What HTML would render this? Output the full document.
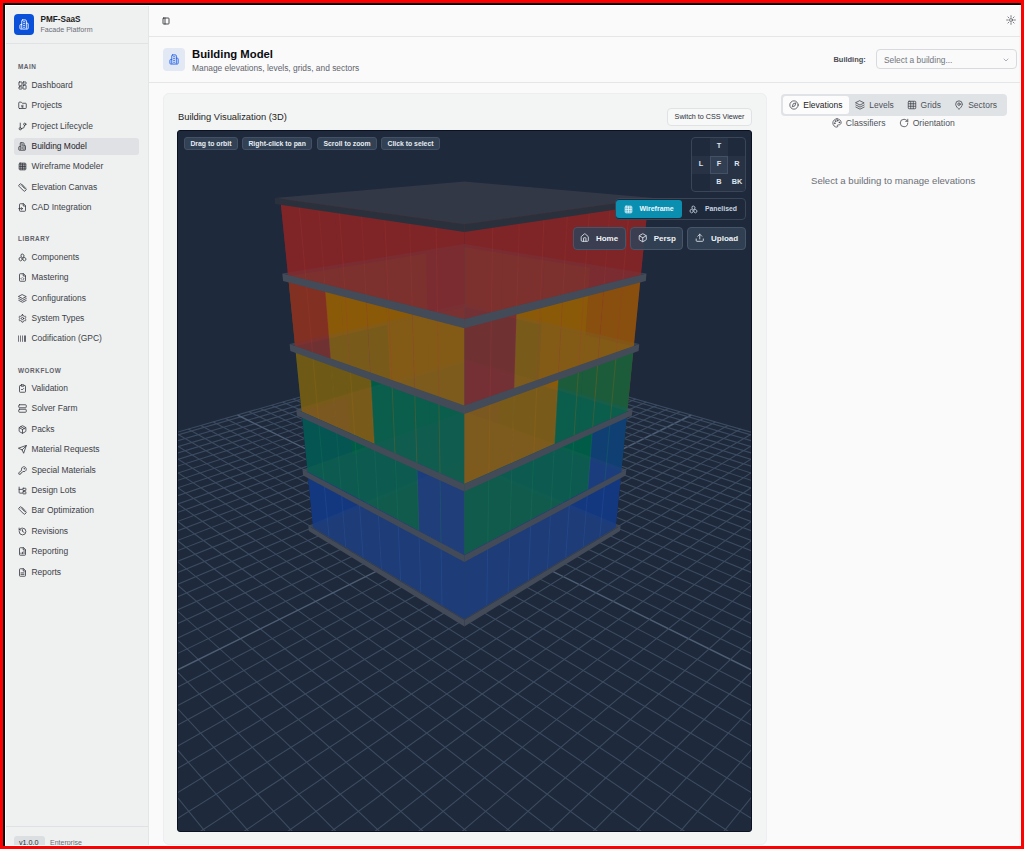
<!DOCTYPE html>
<html><head><meta charset="utf-8"><style>
*{box-sizing:border-box;margin:0;padding:0}
html,body{width:1024px;height:849px;overflow:hidden;background:#ff0000;font-family:"Liberation Sans",sans-serif}
.frame{position:absolute;left:3px;top:3px;width:1018px;height:843px;background:#fdffff;border-top:2px solid #05070c;border-left:2px solid #05070c;overflow:hidden}
.app{position:absolute;left:1px;top:1px;width:1014px;height:839px;background:#fafafa;overflow:hidden}
.side{position:absolute;left:0;top:0;width:143px;height:839px;background:#eff0f0;border-right:1px solid #e3e5e7}
.logo{position:absolute;left:8px;top:8px;width:20px;height:21px;border-radius:4px;background:#0b50d8;display:flex;align-items:center;justify-content:center;color:#fff}
.brand{position:absolute;left:34.5px;top:9px;font-weight:bold;font-size:8.2px;color:#1c1c22;white-space:nowrap}
.brand2{position:absolute;left:34.5px;top:20px;font-size:7.1px;color:#6b6f78;white-space:nowrap}
.sdiv{position:absolute;left:0;top:37px;width:142px;height:1px;background:#e0e2e4}
.sec{position:absolute;left:12px;font-size:6.4px;font-weight:bold;color:#5e616a;letter-spacing:0.55px;line-height:9px}
.nav{position:absolute;left:8px;width:125px;height:17px;border-radius:3px;color:#3c3f47;font-size:8.45px;line-height:17px;white-space:nowrap}
.nav.act{background:#dfe1e4;color:#1e2028}
.ni{position:absolute;left:4px;top:4px;width:9px;height:9px;color:#4a4d55}
.ni svg{display:block}
.nt{position:absolute;left:17.5px;top:0}
.sfoot{position:absolute;left:0;top:820px;width:142px;height:1px;background:#dfe1e4}
.ver{position:absolute;left:8px;top:830px;width:31px;height:14px;border-radius:3px;background:#dcdfe2;font-size:7.2px;color:#2c2f37;padding:1.8px 0 0 5px;line-height:10px}
.ent{position:absolute;left:44px;top:832.3px;font-size:7px;line-height:10px;color:#6b6f78}
.main{position:absolute;left:143px;top:0;width:871px;height:839px}
.hdr{position:absolute;left:0;top:0;width:871px;height:31px;border-bottom:1px solid #e4e6e8;background:#fafafa}
.ph{position:absolute;left:0;top:31px;width:871px;height:46px;border-bottom:1px solid #e4e6e8;background:#fafafa}
.picon{position:absolute;left:14px;top:11px;width:22px;height:23px;border-radius:4px;background:#e2e8f4;color:#2563eb;display:flex;align-items:center;justify-content:center}
.ptitle{position:absolute;left:43px;top:11px;font-size:11.3px;font-weight:bold;color:#0b0b10;white-space:nowrap}
.psub{position:absolute;left:43px;top:25.5px;font-size:8.4px;color:#5f636b;white-space:nowrap}
.blabel{position:absolute;left:684.5px;top:18.3px;font-size:7.45px;font-weight:bold;color:#4a4d55}
.select{position:absolute;left:727px;top:12px;width:141px;height:20px;border:1px solid #d8dadd;border-radius:4px;background:#fafafa;font-size:8.4px;color:#71757d;padding:4.5px 0 0 7px}
.select svg{position:absolute!important;right:6px;top:5.5px}
.card{position:absolute;left:14px;top:87px;width:604px;height:752px;border:1px solid #eceeef;border-radius:6px;background:#f3f4f4}
.ctitle{position:absolute;left:14px;top:18px;font-size:9.35px;color:#1c1d22;white-space:nowrap}
.cssbtn{position:absolute;left:503px;top:13.5px;width:85px;height:18.5px;border:1px solid #e0e2e4;border-radius:4px;background:#f7f8f8;font-size:7.2px;color:#2c2f36;text-align:center;line-height:16.5px}
.canvas{position:absolute;left:13px;top:36px;width:575px;height:702px;border:1px solid #0b1120;border-radius:3px;background:#1e293b;overflow:hidden}
.canvas svg.sc{position:absolute;left:-1px;top:-1px}
.chip{position:absolute;top:6px;height:13px;border:1px solid #435066;border-radius:3px;background:#334155;color:#e8edf3;font-size:6.85px;font-weight:bold;line-height:11px;text-align:center;white-space:nowrap}
.cube{position:absolute;left:513px;top:6px;width:55px;height:55px;border:1px solid #3a4658;border-radius:4px;background:#1f2a3c;overflow:hidden}
.cell{position:absolute;width:18px;height:18px;color:#dfe5ec;font-size:7.3px;font-weight:bold;text-align:center;line-height:16.5px;background:#273345}
.tog{position:absolute;left:437px;top:67.4px;width:131px;height:21.6px;border:1px solid #3a4556;border-radius:4px;background:#1e293b}
.tw{position:absolute;left:0.4px;top:0.6px;width:65.4px;height:18.3px;border-radius:3px;background:#0a8fb0;color:#f0f9ff;font-size:7.05px;font-weight:bold}
.tp{position:absolute;left:67px;top:0.6px;width:62px;height:18.3px;color:#cbd5e1;font-size:6.85px;font-weight:bold}
.btn{position:absolute;top:96.2px;height:22.5px;border:1px solid #475569;border-radius:4px;background:rgba(51,65,85,0.9);color:#eef2f6;font-size:8px;font-weight:bold;white-space:nowrap}
.btn svg,.tw svg,.tp svg{position:absolute!important}
.btn span,.tw span,.tp span{position:absolute}
.rp{position:absolute;left:632px;top:87.8px;width:240px;height:752px}
.tabs{position:absolute;left:0px;top:0;width:226px;height:22px;border-radius:4px;background:#e0e3e6}
.tab{position:absolute;top:2px;height:18px;font-size:8.5px;color:#4e525a;white-space:nowrap}
.tab.act{background:#fcfcfc;border-radius:3px;color:#1c1d22}
.tab svg,.tab span{position:absolute!important}
.tab2{position:absolute;top:24.5px;font-size:8.6px;color:#4e525a;white-space:nowrap}
.tab2 svg,.tab2 span{position:absolute!important}
.empty{position:absolute;left:30px;top:81px;font-size:9.6px;color:#6b6f77;white-space:nowrap}
</style></head><body>
<div class="frame"><div class="app">
<div class="side">
 <div class="logo"><svg width="11" height="11" viewBox="0 0 24 24" fill="none" stroke="currentColor" stroke-width="1.9636363636363638" stroke-linecap="round" stroke-linejoin="round" style="display:block"><rect x="6" y="2" width="10" height="20" rx="2"/><path d="M6 12H4a2 2 0 0 0-2 2v6a2 2 0 0 0 2 2h2"/><path d="M16 9h2a2 2 0 0 1 2 2v9a2 2 0 0 1-2 2h-2"/><path d="M10 6h2M10 10h2M10 14h2M10 18h2"/></svg></div>
 <div class="brand">PMF-SaaS</div>
 <div class="brand2">Facade Platform</div>
 <div class="sdiv"></div>
<div class="sec" style="top:55.7px">MAIN</div>
<div class="nav" style="top:70.6px"><span class="ni"><svg width="9" height="9" viewBox="0 0 24 24" fill="none" stroke="#33363e" stroke-width="2.1333333333333337" stroke-linecap="round" stroke-linejoin="round" style="display:block"><rect x="2.5" y="2.5" width="8" height="10" rx="1.2"/><rect x="13.5" y="2.5" width="8" height="6" rx="1.2"/><rect x="13.5" y="11.5" width="8" height="10" rx="1.2"/><rect x="2.5" y="15.5" width="8" height="6" rx="1.2"/></svg></span><span class="nt">Dashboard</span></div>
<div class="nav" style="top:91.0px"><span class="ni"><svg width="9" height="9" viewBox="0 0 24 24" fill="none" stroke="#33363e" stroke-width="2.1333333333333337" stroke-linecap="round" stroke-linejoin="round" style="display:block"><path d="M4 20h16a2 2 0 0 0 2-2V8a2 2 0 0 0-2-2h-7.9a2 2 0 0 1-1.7-.9L9.6 3.9A2 2 0 0 0 7.9 3H4a2 2 0 0 0-2 2v13a2 2 0 0 0 2 2Z"/><path d="M9 13h2v4M13 11v6"/></svg></span><span class="nt">Projects</span></div>
<div class="nav" style="top:111.6px"><span class="ni"><svg width="9" height="9" viewBox="0 0 24 24" fill="none" stroke="#33363e" stroke-width="2.1333333333333337" stroke-linecap="round" stroke-linejoin="round" style="display:block"><circle cx="18" cy="6" r="3"/><circle cx="6" cy="18" r="3"/><path d="M6 3v12"/><path d="M18 9a9 9 0 0 1-9 9"/></svg></span><span class="nt">Project Lifecycle</span></div>
<div class="nav act" style="top:131.7px"><span class="ni"><svg width="9" height="9" viewBox="0 0 24 24" fill="none" stroke="#33363e" stroke-width="2.1333333333333337" stroke-linecap="round" stroke-linejoin="round" style="display:block"><rect x="6" y="2" width="10" height="20" rx="2"/><path d="M6 12H4a2 2 0 0 0-2 2v6a2 2 0 0 0 2 2h2"/><path d="M16 9h2a2 2 0 0 1 2 2v9a2 2 0 0 1-2 2h-2"/><path d="M10 6h2M10 10h2M10 14h2M10 18h2"/></svg></span><span class="nt">Building Model</span></div>
<div class="nav" style="top:152.1px"><span class="ni"><svg width="9" height="9" viewBox="0 0 24 24" fill="none" stroke="#33363e" stroke-width="2.1333333333333337" stroke-linecap="round" stroke-linejoin="round" style="display:block"><rect x="3" y="3" width="18" height="18" rx="2.5"/><path d="M3 7.5h18M3 12h18M3 16.5h18M7.5 3v18M12 3v18M16.5 3v18" stroke-linecap="butt"/></svg></span><span class="nt">Wireframe Modeler</span></div>
<div class="nav" style="top:172.8px"><span class="ni"><svg width="9" height="9" viewBox="0 0 24 24" fill="none" stroke="#33363e" stroke-width="2.1333333333333337" stroke-linecap="round" stroke-linejoin="round" style="display:block"><path d="M21.3 15.3a2.4 2.4 0 0 1 0 3.4l-2.6 2.6a2.4 2.4 0 0 1-3.4 0L2.7 8.7a2.41 2.41 0 0 1 0-3.4l2.6-2.6a2.41 2.41 0 0 1 3.4 0Z"/><path d="m14.5 12.5 2-2M11.5 9.5l2-2M8.5 6.5l2-2M17.5 15.5l2-2"/></svg></span><span class="nt">Elevation Canvas</span></div>
<div class="nav" style="top:193.2px"><span class="ni"><svg width="9" height="9" viewBox="0 0 24 24" fill="none" stroke="#33363e" stroke-width="2.1333333333333337" stroke-linecap="round" stroke-linejoin="round" style="display:block"><path d="M14 2H6a2 2 0 0 0-2 2v16a2 2 0 0 0 2 2h12a2 2 0 0 0 2-2V8Z"/><path d="M14 2v6h6"/><path d="M2 15h10M9 18l3-3-3-3"/></svg></span><span class="nt">CAD Integration</span></div>
<div class="sec" style="top:227.9px">LIBRARY</div>
<div class="nav" style="top:242.7px"><span class="ni"><svg width="9" height="9" viewBox="0 0 24 24" fill="none" stroke="#33363e" stroke-width="2.1333333333333337" stroke-linecap="round" stroke-linejoin="round" style="display:block"><path d="M12 3l4 2.5v4L12 12l-4-2.5v-4Z"/><path d="M7 12l4 2.5v4L7 21l-4-2.5v-4Z"/><path d="M17 12l4 2.5v4L17 21l-4-2.5v-4Z"/></svg></span><span class="nt">Components</span></div>
<div class="nav" style="top:263.2px"><span class="ni"><svg width="9" height="9" viewBox="0 0 24 24" fill="none" stroke="#33363e" stroke-width="2.1333333333333337" stroke-linecap="round" stroke-linejoin="round" style="display:block"><path d="M14 2H6a2 2 0 0 0-2 2v16a2 2 0 0 0 2 2h12a2 2 0 0 0 2-2V8Z"/><path d="M14 2v6h6"/><path d="m10 13-2 2 2 2M14 17l2-2-2-2"/></svg></span><span class="nt">Mastering</span></div>
<div class="nav" style="top:283.7px"><span class="ni"><svg width="9" height="9" viewBox="0 0 24 24" fill="none" stroke="#33363e" stroke-width="2.1333333333333337" stroke-linecap="round" stroke-linejoin="round" style="display:block"><path d="m12 2 10 5-10 5L2 7Z"/><path d="m2 12 10 5 10-5"/><path d="m2 17 10 5 10-5"/></svg></span><span class="nt">Configurations</span></div>
<div class="nav" style="top:303.5px"><span class="ni"><svg width="9" height="9" viewBox="0 0 24 24" fill="none" stroke="#33363e" stroke-width="2.1333333333333337" stroke-linecap="round" stroke-linejoin="round" style="display:block"><path d="M12.22 2h-.44a2 2 0 0 0-2 2v.18a2 2 0 0 1-1 1.73l-.43.25a2 2 0 0 1-2 0l-.15-.08a2 2 0 0 0-2.73.73l-.22.38a2 2 0 0 0 .73 2.73l.15.1a2 2 0 0 1 1 1.72v.51a2 2 0 0 1-1 1.74l-.15.09a2 2 0 0 0-.73 2.73l.22.38a2 2 0 0 0 2.73.73l.15-.08a2 2 0 0 1 2 0l.43.25a2 2 0 0 1 1 1.73V20a2 2 0 0 0 2 2h.44a2 2 0 0 0 2-2v-.18a2 2 0 0 1 1-1.73l.43-.25a2 2 0 0 1 2 0l.15.08a2 2 0 0 0 2.73-.73l.22-.39a2 2 0 0 0-.73-2.73l-.15-.08a2 2 0 0 1-1-1.74v-.5a2 2 0 0 1 1-1.74l.15-.09a2 2 0 0 0 .73-2.73l-.22-.38a2 2 0 0 0-2.73-.73l-.15.08a2 2 0 0 1-2 0l-.43-.25a2 2 0 0 1-1-1.73V4a2 2 0 0 0-2-2z"/><circle cx="12" cy="12" r="3"/></svg></span><span class="nt">System Types</span></div>
<div class="nav" style="top:323.8px"><span class="ni"><svg width="9" height="9" viewBox="0 0 9 9" style="display:block"><path d="M0.5 1.5v6.3M2.5 1.5v6.3M4.5 1.5v6.3" stroke="#66686e" stroke-width="0.9"/><rect x="6" y="1.5" width="2" height="6.3" fill="#66686e"/></svg></span><span class="nt">Codification (GPC)</span></div>
<div class="sec" style="top:359.6px">WORKFLOW</div>
<div class="nav" style="top:374.4px"><span class="ni"><svg width="9" height="9" viewBox="0 0 24 24" fill="none" stroke="#33363e" stroke-width="2.1333333333333337" stroke-linecap="round" stroke-linejoin="round" style="display:block"><rect x="8" y="2" width="8" height="4" rx="1"/><path d="M16 4h2a2 2 0 0 1 2 2v14a2 2 0 0 1-2 2H6a2 2 0 0 1-2-2V6a2 2 0 0 1 2-2h2"/><path d="m9 14 2 2 4-4"/></svg></span><span class="nt">Validation</span></div>
<div class="nav" style="top:394.0px"><span class="ni"><svg width="9" height="9" viewBox="0 0 24 24" fill="none" stroke="#33363e" stroke-width="2.1333333333333337" stroke-linecap="round" stroke-linejoin="round" style="display:block"><rect x="2" y="2" width="20" height="8" rx="2"/><rect x="2" y="14" width="20" height="8" rx="2"/></svg></span><span class="nt">Solver Farm</span></div>
<div class="nav" style="top:414.5px"><span class="ni"><svg width="9" height="9" viewBox="0 0 24 24" fill="none" stroke="#33363e" stroke-width="2.1333333333333337" stroke-linecap="round" stroke-linejoin="round" style="display:block"><path d="M21 8a2 2 0 0 0-1-1.7l-7-4a2 2 0 0 0-2 0l-7 4A2 2 0 0 0 3 8v8a2 2 0 0 0 1 1.7l7 4a2 2 0 0 0 2 0l7-4a2 2 0 0 0 1-1.7Z"/><path d="M3.3 7 12 12l8.7-5M12 22V12M7.5 4.3l9 5.2"/></svg></span><span class="nt">Packs</span></div>
<div class="nav" style="top:435.3px"><span class="ni"><svg width="9" height="9" viewBox="0 0 24 24" fill="none" stroke="#33363e" stroke-width="2.1333333333333337" stroke-linecap="round" stroke-linejoin="round" style="display:block"><path d="m22 2-7 20-4-9-9-4Z"/><path d="M22 2 11 13"/></svg></span><span class="nt">Material Requests</span></div>
<div class="nav" style="top:455.5px"><span class="ni"><svg width="9" height="9" viewBox="0 0 24 24" fill="none" stroke="#33363e" stroke-width="2.1333333333333337" stroke-linecap="round" stroke-linejoin="round" style="display:block"><path d="M2.586 17.414A2 2 0 0 0 2 18.828V21a1 1 0 0 0 1 1h3a1 1 0 0 0 1-1v-1a1 1 0 0 1 1-1h1a1 1 0 0 0 1-1v-1a1 1 0 0 1 1-1h.172a2 2 0 0 0 1.414-.586l.814-.814a6.5 6.5 0 1 0-4-4z"/><circle cx="16.5" cy="7.5" r=".5"/></svg></span><span class="nt">Special Materials</span></div>
<div class="nav" style="top:475.6px"><span class="ni"><svg width="9" height="9" viewBox="0 0 24 24" fill="none" stroke="#33363e" stroke-width="2.1333333333333337" stroke-linecap="round" stroke-linejoin="round" style="display:block"><path d="M3 3v14a2 2 0 0 0 2 2h6"/><path d="M3 9h8"/><rect x="13" y="6" width="8" height="6" rx="1"/><rect x="13" y="15" width="8" height="6" rx="1"/></svg></span><span class="nt">Design Lots</span></div>
<div class="nav" style="top:496.2px"><span class="ni"><svg width="9" height="9" viewBox="0 0 24 24" fill="none" stroke="#33363e" stroke-width="2.1333333333333337" stroke-linecap="round" stroke-linejoin="round" style="display:block"><path d="M21.3 15.3a2.4 2.4 0 0 1 0 3.4l-2.6 2.6a2.4 2.4 0 0 1-3.4 0L2.7 8.7a2.41 2.41 0 0 1 0-3.4l2.6-2.6a2.41 2.41 0 0 1 3.4 0Z"/><path d="m14.5 12.5 2-2M11.5 9.5l2-2M8.5 6.5l2-2M17.5 15.5l2-2"/></svg></span><span class="nt">Bar Optimization</span></div>
<div class="nav" style="top:516.5px"><span class="ni"><svg width="9" height="9" viewBox="0 0 24 24" fill="none" stroke="#33363e" stroke-width="2.1333333333333337" stroke-linecap="round" stroke-linejoin="round" style="display:block"><path d="M3 12a9 9 0 1 0 9-9 9.75 9.75 0 0 0-6.74 2.74L3 8"/><path d="M3 3v5h5"/><path d="M12 7v5l4 2"/></svg></span><span class="nt">Revisions</span></div>
<div class="nav" style="top:537.1px"><span class="ni"><svg width="9" height="9" viewBox="0 0 24 24" fill="none" stroke="#33363e" stroke-width="2.1333333333333337" stroke-linecap="round" stroke-linejoin="round" style="display:block"><path d="M14 2H6a2 2 0 0 0-2 2v16a2 2 0 0 0 2 2h12a2 2 0 0 0 2-2V8Z"/><path d="M14 2v6h6"/><path d="M8 18v-2M12 18v-4M16 18v-6"/></svg></span><span class="nt">Reporting</span></div>
<div class="nav" style="top:557.7px"><span class="ni"><svg width="9" height="9" viewBox="0 0 24 24" fill="none" stroke="#33363e" stroke-width="2.1333333333333337" stroke-linecap="round" stroke-linejoin="round" style="display:block"><path d="M14 2H6a2 2 0 0 0-2 2v16a2 2 0 0 0 2 2h12a2 2 0 0 0 2-2V8Z"/><path d="M14 2v6h6"/><path d="M8 13h8M8 17h8"/></svg></span><span class="nt">Reports</span></div>
 <div class="sfoot"></div>
 <div class="ver">v1.0.0</div>
 <div class="ent">Enterprise</div>
</div>
<div class="main">
 <div class="hdr"><span style="position:absolute;left:13px;top:11px;color:#1f2127"><svg width="8" height="8" viewBox="0 0 24 24" fill="none" stroke="currentColor" stroke-width="2.4000000000000004" stroke-linecap="round" stroke-linejoin="round" style="display:block"><rect x="3" y="3" width="18" height="18" rx="2"/><path d="M9 3v18"/></svg></span><span style="position:absolute;left:856.8px;top:9px;color:#3a3d45"><svg width="10" height="10" viewBox="0 0 24 24" fill="none" stroke="currentColor" stroke-width="1.56" stroke-linecap="round" stroke-linejoin="round" style="display:block"><circle cx="12" cy="12" r="3.5"/><path d="M12 1.5v4M12 18.5v4M4.6 4.6l2.4 2.4M17 17l2.4 2.4M1.5 12h4M18.5 12h4M7 17l-2.4 2.4M19.4 4.6 17 7"/></svg></span></div>
 <div class="ph">
  <div class="picon"><svg width="11" height="11" viewBox="0 0 24 24" fill="none" stroke="currentColor" stroke-width="1.9636363636363638" stroke-linecap="round" stroke-linejoin="round" style="display:block"><rect x="6" y="2" width="10" height="20" rx="2"/><path d="M6 12H4a2 2 0 0 0-2 2v6a2 2 0 0 0 2 2h2"/><path d="M16 9h2a2 2 0 0 1 2 2v9a2 2 0 0 1-2 2h-2"/><path d="M10 6h2M10 10h2M10 14h2M10 18h2"/></svg></div>
  <div class="ptitle">Building Model</div>
  <div class="psub">Manage elevations, levels, grids, and sectors</div>
  <div class="blabel">Building:</div>
  <div class="select">Select a building...<svg width="8" height="8" viewBox="0 0 24 24" fill="none" stroke="#8a8e96" stroke-width="2.0999999999999996" stroke-linecap="round" stroke-linejoin="round" style="display:block"><path d="m6 9 6 6 6-6"/></svg></div>
 </div>
 <div class="card">
  <div class="ctitle">Building Visualization (3D)</div>
  <div class="cssbtn">Switch to CSS Viewer</div>
  <div class="canvas">
   <svg class="sc" width="576" height="703" viewBox="0 0 576 703"><line x1="-322.0" y1="394.5" x2="310.0" y2="1499.3" stroke="#3c4b61" stroke-width="1.1"/>
<line x1="-331.0" y1="400.7" x2="291.0" y2="221.1" stroke="#3c4b61" stroke-width="1.1"/>
<line x1="-300.7" y1="388.4" x2="352.4" y2="1421.2" stroke="#3c4b61" stroke-width="1.1"/>
<line x1="-327.5" y1="407.2" x2="298.5" y2="223.2" stroke="#3c4b61" stroke-width="1.1"/>
<line x1="-280.0" y1="382.5" x2="390.6" y2="1350.8" stroke="#3c4b61" stroke-width="1.1"/>
<line x1="-323.9" y1="413.8" x2="306.1" y2="225.4" stroke="#3c4b61" stroke-width="1.1"/>
<line x1="-259.9" y1="376.8" x2="425.2" y2="1286.9" stroke="#3c4b61" stroke-width="1.1"/>
<line x1="-320.2" y1="420.7" x2="313.8" y2="227.6" stroke="#3c4b61" stroke-width="1.1"/>
<line x1="-240.4" y1="371.2" x2="456.8" y2="1228.7" stroke="#3c4b61" stroke-width="1.1"/>
<line x1="-316.3" y1="427.8" x2="321.6" y2="229.8" stroke="#3c4b61" stroke-width="1.1"/>
<line x1="-221.4" y1="365.7" x2="485.6" y2="1175.5" stroke="#3c4b61" stroke-width="1.1"/>
<line x1="-312.3" y1="435.1" x2="329.6" y2="232.1" stroke="#3c4b61" stroke-width="1.1"/>
<line x1="-203.0" y1="360.4" x2="512.2" y2="1126.6" stroke="#3c4b61" stroke-width="1.1"/>
<line x1="-308.2" y1="442.7" x2="337.7" y2="234.4" stroke="#3c4b61" stroke-width="1.1"/>
<line x1="-185.0" y1="355.3" x2="536.6" y2="1081.5" stroke="#3c4b61" stroke-width="1.1"/>
<line x1="-304.0" y1="450.5" x2="346.0" y2="236.8" stroke="#3c4b61" stroke-width="1.1"/>
<line x1="-167.5" y1="350.3" x2="559.2" y2="1039.9" stroke="#3c4b61" stroke-width="1.1"/>
<line x1="-299.6" y1="458.6" x2="354.4" y2="239.2" stroke="#3c4b61" stroke-width="1.1"/>
<line x1="-150.5" y1="345.4" x2="580.2" y2="1001.2" stroke="#3c4b61" stroke-width="1.1"/>
<line x1="-295.1" y1="467.0" x2="363.0" y2="241.7" stroke="#3c4b61" stroke-width="1.1"/>
<line x1="-133.9" y1="340.7" x2="599.6" y2="965.3" stroke="#3c4b61" stroke-width="1.1"/>
<line x1="-290.4" y1="475.7" x2="371.8" y2="244.2" stroke="#3c4b61" stroke-width="1.1"/>
<line x1="-117.7" y1="336.0" x2="617.8" y2="931.8" stroke="#3c4b61" stroke-width="1.1"/>
<line x1="-285.5" y1="484.6" x2="380.7" y2="246.7" stroke="#3c4b61" stroke-width="1.1"/>
<line x1="-101.9" y1="331.5" x2="634.8" y2="900.5" stroke="#3c4b61" stroke-width="1.1"/>
<line x1="-280.4" y1="494.0" x2="389.8" y2="249.3" stroke="#3c4b61" stroke-width="1.1"/>
<line x1="-86.6" y1="327.1" x2="650.7" y2="871.2" stroke="#3c4b61" stroke-width="1.1"/>
<line x1="-275.2" y1="503.6" x2="399.1" y2="252.0" stroke="#3c4b61" stroke-width="1.1"/>
<line x1="-71.6" y1="322.8" x2="665.6" y2="843.7" stroke="#3c4b61" stroke-width="1.1"/>
<line x1="-269.8" y1="513.6" x2="408.5" y2="254.7" stroke="#3c4b61" stroke-width="1.1"/>
<line x1="-56.9" y1="318.6" x2="679.6" y2="817.9" stroke="#3c4b61" stroke-width="1.1"/>
<line x1="-264.1" y1="524.1" x2="418.2" y2="257.5" stroke="#3c4b61" stroke-width="1.1"/>
<line x1="-42.7" y1="314.5" x2="692.8" y2="793.5" stroke="#3c4b61" stroke-width="1.1"/>
<line x1="-258.2" y1="534.9" x2="428.0" y2="260.3" stroke="#3c4b61" stroke-width="1.1"/>
<line x1="-28.7" y1="310.5" x2="705.3" y2="770.5" stroke="#3c4b61" stroke-width="1.1"/>
<line x1="-252.1" y1="546.2" x2="438.1" y2="263.2" stroke="#3c4b61" stroke-width="1.1"/>
<line x1="-15.1" y1="306.6" x2="717.1" y2="748.8" stroke="#3c4b61" stroke-width="1.1"/>
<line x1="-245.8" y1="557.9" x2="448.3" y2="266.1" stroke="#3c4b61" stroke-width="1.1"/>
<line x1="-1.8" y1="302.8" x2="728.2" y2="728.2" stroke="#3c4b61" stroke-width="1.1"/>
<line x1="-239.1" y1="570.1" x2="458.8" y2="269.1" stroke="#3c4b61" stroke-width="1.1"/>
<line x1="11.2" y1="299.1" x2="738.8" y2="708.7" stroke="#3c4b61" stroke-width="1.1"/>
<line x1="-232.2" y1="582.9" x2="469.4" y2="272.1" stroke="#3c4b61" stroke-width="1.1"/>
<line x1="23.9" y1="295.5" x2="748.9" y2="690.2" stroke="#3c4b61" stroke-width="1.1"/>
<line x1="-225.0" y1="596.2" x2="480.3" y2="275.3" stroke="#3c4b61" stroke-width="1.1"/>
<line x1="36.3" y1="291.9" x2="758.4" y2="672.6" stroke="#3c4b61" stroke-width="1.1"/>
<line x1="-217.5" y1="610.1" x2="491.5" y2="278.4" stroke="#3c4b61" stroke-width="1.1"/>
<line x1="48.5" y1="288.4" x2="767.5" y2="655.8" stroke="#3c4b61" stroke-width="1.1"/>
<line x1="-209.6" y1="624.6" x2="502.9" y2="281.7" stroke="#3c4b61" stroke-width="1.1"/>
<line x1="60.4" y1="285.0" x2="776.2" y2="639.9" stroke="#4e5e74" stroke-width="1.4"/>
<line x1="-201.3" y1="639.9" x2="514.5" y2="285.0" stroke="#4e5e74" stroke-width="1.4"/>
<line x1="72.0" y1="281.7" x2="784.4" y2="624.6" stroke="#3c4b61" stroke-width="1.1"/>
<line x1="-192.7" y1="655.8" x2="526.4" y2="288.4" stroke="#3c4b61" stroke-width="1.1"/>
<line x1="83.4" y1="278.4" x2="792.3" y2="610.1" stroke="#3c4b61" stroke-width="1.1"/>
<line x1="-183.6" y1="672.6" x2="538.5" y2="291.9" stroke="#3c4b61" stroke-width="1.1"/>
<line x1="94.5" y1="275.3" x2="799.9" y2="596.2" stroke="#3c4b61" stroke-width="1.1"/>
<line x1="-174.0" y1="690.2" x2="550.9" y2="295.5" stroke="#3c4b61" stroke-width="1.1"/>
<line x1="105.4" y1="272.1" x2="807.1" y2="582.9" stroke="#3c4b61" stroke-width="1.1"/>
<line x1="-164.0" y1="708.7" x2="563.6" y2="299.1" stroke="#3c4b61" stroke-width="1.1"/>
<line x1="116.1" y1="269.1" x2="814.0" y2="570.1" stroke="#3c4b61" stroke-width="1.1"/>
<line x1="-153.4" y1="728.2" x2="576.6" y2="302.8" stroke="#3c4b61" stroke-width="1.1"/>
<line x1="126.5" y1="266.1" x2="820.6" y2="557.9" stroke="#3c4b61" stroke-width="1.1"/>
<line x1="-142.2" y1="748.8" x2="589.9" y2="306.6" stroke="#3c4b61" stroke-width="1.1"/>
<line x1="136.8" y1="263.2" x2="827.0" y2="546.2" stroke="#3c4b61" stroke-width="1.1"/>
<line x1="-130.5" y1="770.5" x2="603.6" y2="310.5" stroke="#3c4b61" stroke-width="1.1"/>
<line x1="146.8" y1="260.3" x2="833.1" y2="534.9" stroke="#3c4b61" stroke-width="1.1"/>
<line x1="-118.0" y1="793.5" x2="617.5" y2="314.5" stroke="#3c4b61" stroke-width="1.1"/>
<line x1="156.7" y1="257.5" x2="839.0" y2="524.1" stroke="#3c4b61" stroke-width="1.1"/>
<line x1="-104.8" y1="817.9" x2="631.8" y2="318.6" stroke="#3c4b61" stroke-width="1.1"/>
<line x1="166.3" y1="254.7" x2="844.6" y2="513.6" stroke="#3c4b61" stroke-width="1.1"/>
<line x1="-90.7" y1="843.7" x2="646.4" y2="322.8" stroke="#3c4b61" stroke-width="1.1"/>
<line x1="175.8" y1="252.0" x2="850.1" y2="503.6" stroke="#3c4b61" stroke-width="1.1"/>
<line x1="-75.8" y1="871.2" x2="661.4" y2="327.1" stroke="#3c4b61" stroke-width="1.1"/>
<line x1="185.0" y1="249.3" x2="855.3" y2="494.0" stroke="#3c4b61" stroke-width="1.1"/>
<line x1="-59.9" y1="900.5" x2="676.8" y2="331.5" stroke="#3c4b61" stroke-width="1.1"/>
<line x1="194.1" y1="246.7" x2="860.3" y2="484.6" stroke="#3c4b61" stroke-width="1.1"/>
<line x1="-43.0" y1="931.8" x2="692.6" y2="336.0" stroke="#3c4b61" stroke-width="1.1"/>
<line x1="203.1" y1="244.2" x2="865.2" y2="475.7" stroke="#3c4b61" stroke-width="1.1"/>
<line x1="-24.8" y1="965.3" x2="708.7" y2="340.7" stroke="#3c4b61" stroke-width="1.1"/>
<line x1="211.8" y1="241.7" x2="869.9" y2="467.0" stroke="#3c4b61" stroke-width="1.1"/>
<line x1="-5.3" y1="1001.2" x2="725.3" y2="345.4" stroke="#3c4b61" stroke-width="1.1"/>
<line x1="220.4" y1="239.2" x2="874.5" y2="458.6" stroke="#3c4b61" stroke-width="1.1"/>
<line x1="15.6" y1="1039.9" x2="742.4" y2="350.3" stroke="#3c4b61" stroke-width="1.1"/>
<line x1="228.8" y1="236.8" x2="878.8" y2="450.5" stroke="#3c4b61" stroke-width="1.1"/>
<line x1="38.2" y1="1081.5" x2="759.9" y2="355.3" stroke="#3c4b61" stroke-width="1.1"/>
<line x1="237.1" y1="234.4" x2="883.1" y2="442.7" stroke="#3c4b61" stroke-width="1.1"/>
<line x1="62.7" y1="1126.6" x2="777.8" y2="360.4" stroke="#3c4b61" stroke-width="1.1"/>
<line x1="245.3" y1="232.1" x2="887.2" y2="435.1" stroke="#3c4b61" stroke-width="1.1"/>
<line x1="89.2" y1="1175.5" x2="796.3" y2="365.7" stroke="#3c4b61" stroke-width="1.1"/>
<line x1="253.2" y1="229.8" x2="891.2" y2="427.8" stroke="#3c4b61" stroke-width="1.1"/>
<line x1="118.1" y1="1228.7" x2="815.3" y2="371.2" stroke="#3c4b61" stroke-width="1.1"/>
<line x1="261.1" y1="227.6" x2="895.0" y2="420.7" stroke="#3c4b61" stroke-width="1.1"/>
<line x1="149.6" y1="1286.9" x2="834.8" y2="376.8" stroke="#3c4b61" stroke-width="1.1"/>
<line x1="268.8" y1="225.4" x2="898.7" y2="413.8" stroke="#3c4b61" stroke-width="1.1"/>
<line x1="184.3" y1="1350.8" x2="854.9" y2="382.5" stroke="#3c4b61" stroke-width="1.1"/>
<line x1="276.4" y1="223.2" x2="902.4" y2="407.2" stroke="#3c4b61" stroke-width="1.1"/>
<line x1="222.5" y1="1421.2" x2="875.5" y2="388.4" stroke="#3c4b61" stroke-width="1.1"/>
<line x1="283.8" y1="221.1" x2="905.9" y2="400.7" stroke="#3c4b61" stroke-width="1.1"/>
<line x1="264.8" y1="1499.3" x2="896.8" y2="394.5" stroke="#3c4b61" stroke-width="1.1"/>
<line x1="-332.7" y1="397.6" x2="287.4" y2="1541.0" stroke="#3c4b61" stroke-width="1.1"/>
<line x1="-332.7" y1="397.6" x2="287.4" y2="220.0" stroke="#3c4b61" stroke-width="1.1"/>
<line x1="287.4" y1="220.0" x2="907.6" y2="397.6" stroke="#3c4b61" stroke-width="1.1"/>
<line x1="287.4" y1="1541.0" x2="907.6" y2="397.6" stroke="#3c4b61" stroke-width="1.1"/>
<polygon points="131.5,397.6 287.4,492.3 443.4,397.6 287.4,332.3" fill="#1e293b"/>
<polygon points="136.1,397.6 287.4,488.9 438.7,397.6 471.4,69.7 287.4,53.2 103.4,69.7" fill="#1e293b"/>
<polygon points="438.7,397.6 396.0,379.6 399.9,325.6 444.3,341.7" fill="#143a84" fill-opacity="0.750"/>
<polygon points="396.0,379.6 356.9,363.2 359.2,310.8 399.9,325.6" fill="#143a84" fill-opacity="0.750"/>
<polygon points="356.9,363.2 320.8,348.0 321.9,297.3 359.2,310.8" fill="#143a84" fill-opacity="0.750"/>
<polygon points="320.8,348.0 287.4,333.9 287.4,284.8 321.9,297.3" fill="#143a84" fill-opacity="0.750"/>
<polygon points="287.4,333.9 254.1,348.0 253.0,297.3 287.4,284.8" fill="#143a84" fill-opacity="0.750"/>
<polygon points="254.1,348.0 218.0,363.2 215.6,310.8 253.0,297.3" fill="#143a84" fill-opacity="0.750"/>
<polygon points="218.0,363.2 178.8,379.6 175.0,325.6 215.6,310.8" fill="#143a84" fill-opacity="0.750"/>
<polygon points="178.8,379.6 136.1,397.6 130.6,341.7 175.0,325.6" fill="#143a84" fill-opacity="0.750"/>
<polygon points="444.3,341.7 399.9,325.6 404.0,267.5 450.3,281.5" fill="#006048" fill-opacity="0.750"/>
<polygon points="399.9,325.6 359.2,310.8 361.7,254.8 404.0,267.5" fill="#006048" fill-opacity="0.750"/>
<polygon points="359.2,310.8 321.9,297.3 323.0,243.2 361.7,254.8" fill="#006048" fill-opacity="0.750"/>
<polygon points="321.9,297.3 287.4,284.8 287.4,232.5 323.0,243.2" fill="#143a84" fill-opacity="0.750"/>
<polygon points="287.4,284.8 253.0,297.3 251.8,243.2 287.4,232.5" fill="#006048" fill-opacity="0.750"/>
<polygon points="253.0,297.3 215.6,310.8 213.1,254.8 251.8,243.2" fill="#006048" fill-opacity="0.750"/>
<polygon points="215.6,310.8 175.0,325.6 170.9,267.5 213.1,254.8" fill="#006048" fill-opacity="0.750"/>
<polygon points="175.0,325.6 130.6,341.7 124.6,281.5 170.9,267.5" fill="#143a84" fill-opacity="0.750"/>
<polygon points="450.3,281.5 404.0,267.5 408.4,205.1 456.8,216.5" fill="#915d07" fill-opacity="0.750"/>
<polygon points="404.0,267.5 361.7,254.8 364.4,194.8 408.4,205.1" fill="#915d07" fill-opacity="0.750"/>
<polygon points="361.7,254.8 323.0,243.2 324.2,185.3 364.4,194.8" fill="#006048" fill-opacity="0.750"/>
<polygon points="323.0,243.2 287.4,232.5 287.4,176.7 324.2,185.3" fill="#006048" fill-opacity="0.750"/>
<polygon points="287.4,232.5 251.8,243.2 250.6,185.3 287.4,176.7" fill="#915d07" fill-opacity="0.750"/>
<polygon points="251.8,243.2 213.1,254.8 210.4,194.8 250.6,185.3" fill="#915d07" fill-opacity="0.750"/>
<polygon points="213.1,254.8 170.9,267.5 166.5,205.1 210.4,194.8" fill="#006048" fill-opacity="0.750"/>
<polygon points="170.9,267.5 124.6,281.5 118.1,216.5 166.5,205.1" fill="#006048" fill-opacity="0.750"/>
<polygon points="456.8,216.5 408.4,205.1 413.2,137.8 463.8,146.1" fill="#872527" fill-opacity="0.750"/>
<polygon points="408.4,205.1 364.4,194.8 367.3,130.2 413.2,137.8" fill="#915d07" fill-opacity="0.750"/>
<polygon points="364.4,194.8 324.2,185.3 325.6,123.3 367.3,130.2" fill="#915d07" fill-opacity="0.750"/>
<polygon points="324.2,185.3 287.4,176.7 287.4,117.0 325.6,123.3" fill="#915d07" fill-opacity="0.750"/>
<polygon points="287.4,176.7 250.6,185.3 249.3,123.3 287.4,117.0" fill="#872527" fill-opacity="0.750"/>
<polygon points="250.6,185.3 210.4,194.8 207.5,130.2 249.3,123.3" fill="#915d07" fill-opacity="0.750"/>
<polygon points="210.4,194.8 166.5,205.1 161.7,137.8 207.5,130.2" fill="#915d07" fill-opacity="0.750"/>
<polygon points="166.5,205.1 118.1,216.5 111.1,146.1 161.7,137.8" fill="#915d07" fill-opacity="0.750"/>
<polygon points="463.8,146.1 413.2,137.8 418.3,64.9 471.4,69.7" fill="#872527" fill-opacity="0.750"/>
<polygon points="413.2,137.8 367.3,130.2 370.4,60.6 418.3,64.9" fill="#872527" fill-opacity="0.750"/>
<polygon points="367.3,130.2 325.6,123.3 327.0,56.7 370.4,60.6" fill="#872527" fill-opacity="0.750"/>
<polygon points="325.6,123.3 287.4,117.0 287.4,53.2 327.0,56.7" fill="#872527" fill-opacity="0.750"/>
<polygon points="287.4,117.0 249.3,123.3 247.9,56.7 287.4,53.2" fill="#872527" fill-opacity="0.750"/>
<polygon points="249.3,123.3 207.5,130.2 204.4,60.6 247.9,56.7" fill="#872527" fill-opacity="0.750"/>
<polygon points="207.5,130.2 161.7,137.8 156.5,64.9 204.4,60.6" fill="#872527" fill-opacity="0.750"/>
<polygon points="161.7,137.8 111.1,146.1 103.4,69.7 156.5,64.9" fill="#872527" fill-opacity="0.750"/>
<polygon points="131.3,395.7 287.4,490.1 443.6,395.7 287.4,330.6" fill="#4b5564" fill-opacity="0.600"/>
<polygon points="125.5,339.6 287.4,425.2 449.3,339.6 287.4,281.5" fill="#4b5564" fill-opacity="0.600"/>
<polygon points="119.3,279.3 287.4,354.0 455.6,279.3 287.4,229.3" fill="#4b5564" fill-opacity="0.600"/>
<polygon points="112.6,214.1 287.4,275.6 462.3,214.1 287.4,173.6" fill="#4b5564" fill-opacity="0.600"/>
<polygon points="105.3,143.5 287.4,189.0 469.5,143.5 287.4,114.1" fill="#4b5564" fill-opacity="0.600"/>
<polygon points="136.1,397.6 168.7,417.2 164.1,359.3 130.6,341.7" fill="#143a84" fill-opacity="0.750"/>
<polygon points="168.7,417.2 204.4,438.8 201.0,378.8 164.1,359.3" fill="#143a84" fill-opacity="0.750"/>
<polygon points="204.4,438.8 243.8,462.5 241.9,400.4 201.0,378.8" fill="#143a84" fill-opacity="0.750"/>
<polygon points="243.8,462.5 287.4,488.9 287.4,424.4 241.9,400.4" fill="#143a84" fill-opacity="0.750"/>
<line x1="152.0" y1="407.2" x2="146.9" y2="350.3" stroke="#3060b0" stroke-width="0.6" stroke-opacity="0.450"/>
<line x1="168.7" y1="417.2" x2="164.1" y2="359.3" stroke="#3060b0" stroke-width="0.6" stroke-opacity="0.450"/>
<line x1="186.1" y1="427.7" x2="182.1" y2="368.8" stroke="#3060b0" stroke-width="0.6" stroke-opacity="0.450"/>
<line x1="204.4" y1="438.8" x2="201.0" y2="378.8" stroke="#3060b0" stroke-width="0.6" stroke-opacity="0.450"/>
<line x1="223.6" y1="450.3" x2="220.9" y2="389.3" stroke="#3060b0" stroke-width="0.6" stroke-opacity="0.450"/>
<line x1="243.8" y1="462.5" x2="241.9" y2="400.4" stroke="#3060b0" stroke-width="0.6" stroke-opacity="0.450"/>
<line x1="265.0" y1="475.3" x2="264.0" y2="412.1" stroke="#3060b0" stroke-width="0.6" stroke-opacity="0.450"/>
<line x1="133.4" y1="370.1" x2="287.4" y2="457.3" stroke="#3060b0" stroke-width="0.6" stroke-opacity="0.000"/>
<polygon points="287.4,488.9 331.1,462.5 333.0,400.4 287.4,424.4" fill="#143a84" fill-opacity="0.750"/>
<polygon points="331.1,462.5 370.5,438.8 373.8,378.8 333.0,400.4" fill="#143a84" fill-opacity="0.750"/>
<polygon points="370.5,438.8 406.2,417.2 410.8,359.3 373.8,378.8" fill="#143a84" fill-opacity="0.750"/>
<polygon points="406.2,417.2 438.7,397.6 444.3,341.7 410.8,359.3" fill="#143a84" fill-opacity="0.750"/>
<line x1="309.8" y1="475.3" x2="310.8" y2="412.1" stroke="#3060b0" stroke-width="0.6" stroke-opacity="0.450"/>
<line x1="331.1" y1="462.5" x2="333.0" y2="400.4" stroke="#3060b0" stroke-width="0.6" stroke-opacity="0.450"/>
<line x1="351.3" y1="450.3" x2="353.9" y2="389.3" stroke="#3060b0" stroke-width="0.6" stroke-opacity="0.450"/>
<line x1="370.5" y1="438.8" x2="373.8" y2="378.8" stroke="#3060b0" stroke-width="0.6" stroke-opacity="0.450"/>
<line x1="388.7" y1="427.7" x2="392.8" y2="368.8" stroke="#3060b0" stroke-width="0.6" stroke-opacity="0.450"/>
<line x1="406.2" y1="417.2" x2="410.8" y2="359.3" stroke="#3060b0" stroke-width="0.6" stroke-opacity="0.450"/>
<line x1="422.8" y1="407.2" x2="427.9" y2="350.3" stroke="#3060b0" stroke-width="0.6" stroke-opacity="0.450"/>
<line x1="287.4" y1="457.3" x2="441.4" y2="370.1" stroke="#3060b0" stroke-width="0.6" stroke-opacity="0.000"/>
<polygon points="130.6,341.7 164.1,359.3 159.1,296.8 124.6,281.5" fill="#006048" fill-opacity="0.750"/>
<polygon points="164.1,359.3 201.0,378.8 197.3,313.8 159.1,296.8" fill="#006048" fill-opacity="0.750"/>
<polygon points="201.0,378.8 241.9,400.4 239.9,332.7 197.3,313.8" fill="#006048" fill-opacity="0.750"/>
<polygon points="241.9,400.4 287.4,424.4 287.4,353.8 239.9,332.7" fill="#143a84" fill-opacity="0.750"/>
<line x1="146.9" y1="350.3" x2="141.4" y2="289.0" stroke="#1a8058" stroke-width="0.6" stroke-opacity="0.450"/>
<line x1="164.1" y1="359.3" x2="159.1" y2="296.8" stroke="#1a8058" stroke-width="0.6" stroke-opacity="0.450"/>
<line x1="182.1" y1="368.8" x2="177.7" y2="305.1" stroke="#1a8058" stroke-width="0.6" stroke-opacity="0.450"/>
<line x1="201.0" y1="378.8" x2="197.3" y2="313.8" stroke="#1a8058" stroke-width="0.6" stroke-opacity="0.450"/>
<line x1="220.9" y1="389.3" x2="218.0" y2="323.0" stroke="#1a8058" stroke-width="0.6" stroke-opacity="0.450"/>
<line x1="241.9" y1="400.4" x2="239.9" y2="332.7" stroke="#1a8058" stroke-width="0.6" stroke-opacity="0.450"/>
<line x1="264.0" y1="412.1" x2="263.0" y2="342.9" stroke="#1a8058" stroke-width="0.6" stroke-opacity="0.450"/>
<line x1="127.6" y1="312.1" x2="287.4" y2="389.9" stroke="#1a8058" stroke-width="0.6" stroke-opacity="0.000"/>
<polygon points="287.4,424.4 333.0,400.4 335.0,332.7 287.4,353.8" fill="#006048" fill-opacity="0.750"/>
<polygon points="333.0,400.4 373.8,378.8 377.5,313.8 335.0,332.7" fill="#006048" fill-opacity="0.750"/>
<polygon points="373.8,378.8 410.8,359.3 415.7,296.8 377.5,313.8" fill="#006048" fill-opacity="0.750"/>
<polygon points="410.8,359.3 444.3,341.7 450.3,281.5 415.7,296.8" fill="#143a84" fill-opacity="0.750"/>
<line x1="310.8" y1="412.1" x2="311.9" y2="342.9" stroke="#1a8058" stroke-width="0.6" stroke-opacity="0.450"/>
<line x1="333.0" y1="400.4" x2="335.0" y2="332.7" stroke="#1a8058" stroke-width="0.6" stroke-opacity="0.450"/>
<line x1="353.9" y1="389.3" x2="356.8" y2="323.0" stroke="#1a8058" stroke-width="0.6" stroke-opacity="0.450"/>
<line x1="373.8" y1="378.8" x2="377.5" y2="313.8" stroke="#1a8058" stroke-width="0.6" stroke-opacity="0.450"/>
<line x1="392.8" y1="368.8" x2="397.1" y2="305.1" stroke="#1a8058" stroke-width="0.6" stroke-opacity="0.450"/>
<line x1="410.8" y1="359.3" x2="415.7" y2="296.8" stroke="#1a8058" stroke-width="0.6" stroke-opacity="0.450"/>
<line x1="427.9" y1="350.3" x2="433.4" y2="289.0" stroke="#1a8058" stroke-width="0.6" stroke-opacity="0.450"/>
<line x1="287.4" y1="389.9" x2="447.2" y2="312.1" stroke="#1a8058" stroke-width="0.6" stroke-opacity="0.000"/>
<polygon points="124.6,281.5 159.1,296.8 153.7,229.1 118.1,216.5" fill="#915d07" fill-opacity="0.750"/>
<polygon points="159.1,296.8 197.3,313.8 193.4,243.0 153.7,229.1" fill="#915d07" fill-opacity="0.750"/>
<polygon points="197.3,313.8 239.9,332.7 237.6,258.7 193.4,243.0" fill="#006048" fill-opacity="0.750"/>
<polygon points="239.9,332.7 287.4,353.8 287.4,276.2 237.6,258.7" fill="#006048" fill-opacity="0.750"/>
<line x1="141.4" y1="289.0" x2="135.5" y2="222.6" stroke="#a06a10" stroke-width="0.6" stroke-opacity="0.450"/>
<line x1="159.1" y1="296.8" x2="153.7" y2="229.1" stroke="#a06a10" stroke-width="0.6" stroke-opacity="0.450"/>
<line x1="177.7" y1="305.1" x2="173.0" y2="235.9" stroke="#a06a10" stroke-width="0.6" stroke-opacity="0.450"/>
<line x1="197.3" y1="313.8" x2="193.4" y2="243.0" stroke="#a06a10" stroke-width="0.6" stroke-opacity="0.450"/>
<line x1="218.0" y1="323.0" x2="214.9" y2="250.6" stroke="#a06a10" stroke-width="0.6" stroke-opacity="0.450"/>
<line x1="239.9" y1="332.7" x2="237.6" y2="258.7" stroke="#a06a10" stroke-width="0.6" stroke-opacity="0.450"/>
<line x1="263.0" y1="342.9" x2="261.8" y2="267.2" stroke="#a06a10" stroke-width="0.6" stroke-opacity="0.450"/>
<line x1="121.4" y1="249.6" x2="287.4" y2="316.0" stroke="#a06a10" stroke-width="0.6" stroke-opacity="0.000"/>
<polygon points="287.4,353.8 335.0,332.7 337.2,258.7 287.4,276.2" fill="#915d07" fill-opacity="0.750"/>
<polygon points="335.0,332.7 377.5,313.8 381.5,243.0 337.2,258.7" fill="#915d07" fill-opacity="0.750"/>
<polygon points="377.5,313.8 415.7,296.8 421.1,229.1 381.5,243.0" fill="#006048" fill-opacity="0.750"/>
<polygon points="415.7,296.8 450.3,281.5 456.8,216.5 421.1,229.1" fill="#006048" fill-opacity="0.750"/>
<line x1="311.9" y1="342.9" x2="313.1" y2="267.2" stroke="#a06a10" stroke-width="0.6" stroke-opacity="0.450"/>
<line x1="335.0" y1="332.7" x2="337.2" y2="258.7" stroke="#a06a10" stroke-width="0.6" stroke-opacity="0.450"/>
<line x1="356.8" y1="323.0" x2="360.0" y2="250.6" stroke="#a06a10" stroke-width="0.6" stroke-opacity="0.450"/>
<line x1="377.5" y1="313.8" x2="381.5" y2="243.0" stroke="#a06a10" stroke-width="0.6" stroke-opacity="0.450"/>
<line x1="397.1" y1="305.1" x2="401.8" y2="235.9" stroke="#a06a10" stroke-width="0.6" stroke-opacity="0.450"/>
<line x1="415.7" y1="296.8" x2="421.1" y2="229.1" stroke="#a06a10" stroke-width="0.6" stroke-opacity="0.450"/>
<line x1="433.4" y1="289.0" x2="439.4" y2="222.6" stroke="#a06a10" stroke-width="0.6" stroke-opacity="0.450"/>
<line x1="287.4" y1="316.0" x2="453.5" y2="249.6" stroke="#a06a10" stroke-width="0.6" stroke-opacity="0.000"/>
<polygon points="118.1,216.5 153.7,229.1 147.9,155.4 111.1,146.1" fill="#872527" fill-opacity="0.750"/>
<polygon points="153.7,229.1 193.4,243.0 189.0,165.7 147.9,155.4" fill="#915d07" fill-opacity="0.750"/>
<polygon points="193.4,243.0 237.6,258.7 235.2,177.3 189.0,165.7" fill="#915d07" fill-opacity="0.750"/>
<polygon points="237.6,258.7 287.4,276.2 287.4,190.5 235.2,177.3" fill="#915d07" fill-opacity="0.750"/>
<line x1="135.5" y1="222.6" x2="129.0" y2="150.6" stroke="#a03838" stroke-width="0.6" stroke-opacity="0.450"/>
<line x1="153.7" y1="229.1" x2="147.9" y2="155.4" stroke="#a03838" stroke-width="0.6" stroke-opacity="0.450"/>
<line x1="173.0" y1="235.9" x2="167.9" y2="160.4" stroke="#a03838" stroke-width="0.6" stroke-opacity="0.450"/>
<line x1="193.4" y1="243.0" x2="189.0" y2="165.7" stroke="#a03838" stroke-width="0.6" stroke-opacity="0.450"/>
<line x1="214.9" y1="250.6" x2="211.4" y2="171.4" stroke="#a03838" stroke-width="0.6" stroke-opacity="0.450"/>
<line x1="237.6" y1="258.7" x2="235.2" y2="177.3" stroke="#a03838" stroke-width="0.6" stroke-opacity="0.450"/>
<line x1="261.8" y1="267.2" x2="260.5" y2="183.7" stroke="#a03838" stroke-width="0.6" stroke-opacity="0.450"/>
<line x1="114.6" y1="182.0" x2="287.4" y2="234.4" stroke="#a03838" stroke-width="0.6" stroke-opacity="0.000"/>
<polygon points="287.4,276.2 337.2,258.7 339.7,177.3 287.4,190.5" fill="#872527" fill-opacity="0.750"/>
<polygon points="337.2,258.7 381.5,243.0 385.8,165.7 339.7,177.3" fill="#915d07" fill-opacity="0.750"/>
<polygon points="381.5,243.0 421.1,229.1 427.0,155.4 385.8,165.7" fill="#915d07" fill-opacity="0.750"/>
<polygon points="421.1,229.1 456.8,216.5 463.8,146.1 427.0,155.4" fill="#915d07" fill-opacity="0.750"/>
<line x1="313.1" y1="267.2" x2="314.4" y2="183.7" stroke="#a03838" stroke-width="0.6" stroke-opacity="0.450"/>
<line x1="337.2" y1="258.7" x2="339.7" y2="177.3" stroke="#a03838" stroke-width="0.6" stroke-opacity="0.450"/>
<line x1="360.0" y1="250.6" x2="363.4" y2="171.4" stroke="#a03838" stroke-width="0.6" stroke-opacity="0.450"/>
<line x1="381.5" y1="243.0" x2="385.8" y2="165.7" stroke="#a03838" stroke-width="0.6" stroke-opacity="0.450"/>
<line x1="401.8" y1="235.9" x2="407.0" y2="160.4" stroke="#a03838" stroke-width="0.6" stroke-opacity="0.450"/>
<line x1="421.1" y1="229.1" x2="427.0" y2="155.4" stroke="#a03838" stroke-width="0.6" stroke-opacity="0.450"/>
<line x1="439.4" y1="222.6" x2="445.9" y2="150.6" stroke="#a03838" stroke-width="0.6" stroke-opacity="0.450"/>
<line x1="287.4" y1="234.4" x2="460.2" y2="182.0" stroke="#a03838" stroke-width="0.6" stroke-opacity="0.000"/>
<polygon points="111.1,146.1 147.9,155.4 141.5,75.0 103.4,69.7" fill="#872527" fill-opacity="0.750"/>
<polygon points="147.9,155.4 189.0,165.7 184.2,80.9 141.5,75.0" fill="#872527" fill-opacity="0.750"/>
<polygon points="189.0,165.7 235.2,177.3 232.5,87.6 184.2,80.9" fill="#872527" fill-opacity="0.750"/>
<polygon points="235.2,177.3 287.4,190.5 287.4,95.3 232.5,87.6" fill="#872527" fill-opacity="0.750"/>
<line x1="129.0" y1="150.6" x2="121.9" y2="72.2" stroke="#a03838" stroke-width="0.6" stroke-opacity="0.450"/>
<line x1="147.9" y1="155.4" x2="141.5" y2="75.0" stroke="#a03838" stroke-width="0.6" stroke-opacity="0.450"/>
<line x1="167.9" y1="160.4" x2="162.2" y2="77.9" stroke="#a03838" stroke-width="0.6" stroke-opacity="0.450"/>
<line x1="189.0" y1="165.7" x2="184.2" y2="80.9" stroke="#a03838" stroke-width="0.6" stroke-opacity="0.450"/>
<line x1="211.4" y1="171.4" x2="207.6" y2="84.2" stroke="#a03838" stroke-width="0.6" stroke-opacity="0.450"/>
<line x1="235.2" y1="177.3" x2="232.5" y2="87.6" stroke="#a03838" stroke-width="0.6" stroke-opacity="0.450"/>
<line x1="260.5" y1="183.7" x2="259.0" y2="91.3" stroke="#a03838" stroke-width="0.6" stroke-opacity="0.450"/>
<line x1="107.3" y1="108.7" x2="287.4" y2="144.2" stroke="#a03838" stroke-width="0.6" stroke-opacity="0.000"/>
<polygon points="287.4,190.5 339.7,177.3 342.4,87.6 287.4,95.3" fill="#872527" fill-opacity="0.750"/>
<polygon points="339.7,177.3 385.8,165.7 390.6,80.9 342.4,87.6" fill="#872527" fill-opacity="0.750"/>
<polygon points="385.8,165.7 427.0,155.4 433.3,75.0 390.6,80.9" fill="#872527" fill-opacity="0.750"/>
<polygon points="427.0,155.4 463.8,146.1 471.4,69.7 433.3,75.0" fill="#872527" fill-opacity="0.750"/>
<line x1="314.4" y1="183.7" x2="315.8" y2="91.3" stroke="#a03838" stroke-width="0.6" stroke-opacity="0.450"/>
<line x1="339.7" y1="177.3" x2="342.4" y2="87.6" stroke="#a03838" stroke-width="0.6" stroke-opacity="0.450"/>
<line x1="363.4" y1="171.4" x2="367.2" y2="84.2" stroke="#a03838" stroke-width="0.6" stroke-opacity="0.450"/>
<line x1="385.8" y1="165.7" x2="390.6" y2="80.9" stroke="#a03838" stroke-width="0.6" stroke-opacity="0.450"/>
<line x1="407.0" y1="160.4" x2="412.6" y2="77.9" stroke="#a03838" stroke-width="0.6" stroke-opacity="0.450"/>
<line x1="427.0" y1="155.4" x2="433.3" y2="75.0" stroke="#a03838" stroke-width="0.6" stroke-opacity="0.450"/>
<line x1="445.9" y1="150.6" x2="452.9" y2="72.2" stroke="#a03838" stroke-width="0.6" stroke-opacity="0.450"/>
<line x1="287.4" y1="144.2" x2="467.5" y2="108.7" stroke="#a03838" stroke-width="0.6" stroke-opacity="0.000"/>
<polygon points="131.8,401.1 287.4,496.4 287.4,490.1 131.3,395.7" fill="#434a58"/>
<polygon points="287.4,496.4 443.0,401.1 443.6,395.7 287.4,490.1" fill="#434a58"/>
<polygon points="126.1,345.5 287.4,432.0 287.4,425.2 125.5,339.6" fill="#434a58"/>
<polygon points="287.4,432.0 448.7,345.5 449.3,339.6 287.4,425.2" fill="#434a58"/>
<polygon points="119.9,285.6 287.4,361.5 287.4,354.0 119.3,279.3" fill="#434a58"/>
<polygon points="287.4,361.5 454.9,285.6 455.6,279.3 287.4,354.0" fill="#434a58"/>
<polygon points="113.3,220.9 287.4,283.9 287.4,275.6 112.6,214.1" fill="#434a58"/>
<polygon points="287.4,283.9 461.6,220.9 462.3,214.1 287.4,275.6" fill="#434a58"/>
<polygon points="106.1,150.9 287.4,198.2 287.4,189.0 105.3,143.5" fill="#434a58"/>
<polygon points="287.4,198.2 468.8,150.9 469.5,143.5 287.4,189.0" fill="#434a58"/>
<polygon points="97.6,68.1 287.4,94.3 477.3,68.1 287.4,51.4" fill="#323846"/>
<polygon points="98.2,74.1 287.4,101.9 287.4,94.3 97.6,68.1" fill="#2b313c"/>
<polygon points="287.4,101.9 476.7,74.1 477.3,68.1 287.4,94.3" fill="#2b313c"/></svg>
   <div class="chip" style="left:6.3px;width:53.3px">Drag to orbit</div>
<div class="chip" style="left:64.3px;width:69.7px">Right-click to pan</div>
<div class="chip" style="left:139.3px;width:59.5px">Scroll to zoom</div>
<div class="chip" style="left:203.2px;width:58.6px">Click to select</div>
   <div class="cube"><div class="cell" style="left:18px;top:0px">T</div><div class="cell" style="left:0px;top:18px">L</div><div class="cell" style="left:18px;top:18px;outline:1px solid #435066;outline-offset:-1px;background:#323f52">F</div><div class="cell" style="left:36px;top:18px">R</div><div class="cell" style="left:18px;top:36px">B</div><div class="cell" style="left:36px;top:36px">BK</div></div>
   <div class="tog"><div class="tw"><svg style="left:7.5px;top:4.6px" width="9" height="9" viewBox="0 0 24 24" fill="none" stroke="currentColor" stroke-width="2.0" stroke-linecap="round" stroke-linejoin="round" style="display:block"><rect x="3" y="3" width="18" height="18" rx="2.5"/><path d="M3 7.5h18M3 12h18M3 16.5h18M7.5 3v18M12 3v18M16.5 3v18" stroke-linecap="butt"/></svg><span style="left:23px;top:5.2px">Wireframe</span></div><div class="tp"><svg style="left:6px;top:4.8px" width="9" height="9" viewBox="0 0 24 24" fill="none" stroke="currentColor" stroke-width="2.1333333333333337" stroke-linecap="round" stroke-linejoin="round" style="display:block"><path d="M12 3l4 2.5v4L12 12l-4-2.5v-4Z"/><path d="M7 12l4 2.5v4L7 21l-4-2.5v-4Z"/><path d="M17 12l4 2.5v4L17 21l-4-2.5v-4Z"/></svg><span style="left:22px;top:5.2px">Panelised</span></div></div>
   <div class="btn" style="left:394.9px;width:52.7px"><svg style="left:6.0px;top:5.3px" width="9.5" height="9.5" viewBox="0 0 24 24" fill="none" stroke="#e2e8f0" stroke-width="2.1473684210526316" stroke-linecap="round" stroke-linejoin="round" style="display:block"><path d="M15 21v-8a1 1 0 0 0-1-1h-4a1 1 0 0 0-1 1v8"/><path d="M3 10a2 2 0 0 1 .7-1.5l7-6a2 2 0 0 1 2.6 0l7 6A2 2 0 0 1 21 10v9a2 2 0 0 1-2 2H5a2 2 0 0 1-2-2Z"/></svg><span style="left:22.0px;top:5.5px">Home</span></div>
<div class="btn" style="left:452.3px;width:53.2px"><svg style="left:6.4px;top:5.3px" width="9.5" height="9.5" viewBox="0 0 24 24" fill="none" stroke="#e2e8f0" stroke-width="2.1473684210526316" stroke-linecap="round" stroke-linejoin="round" style="display:block"><path d="M21 8a2 2 0 0 0-1-1.7l-7-4a2 2 0 0 0-2 0l-7 4A2 2 0 0 0 3 8v8a2 2 0 0 0 1 1.7l7 4a2 2 0 0 0 2 0l7-4a2 2 0 0 0 1-1.7Z"/><path d="m3.3 7 8.7 5 8.7-5M12 22V12"/></svg><span style="left:22.4px;top:5.5px">Persp</span></div>
<div class="btn" style="left:509.2px;width:58.6px"><svg style="left:7.0px;top:5.3px" width="9.5" height="9.5" viewBox="0 0 24 24" fill="none" stroke="#e2e8f0" stroke-width="2.1473684210526316" stroke-linecap="round" stroke-linejoin="round" style="display:block"><path d="M21 15v4a2 2 0 0 1-2 2H5a2 2 0 0 1-2-2v-4"/><path d="m17 8-5-5-5 5M12 3v12"/></svg><span style="left:22.9px;top:5.5px">Upload</span></div>
  </div>
 </div>
 <div class="rp">
  <div class="tabs"><div class="tab act" style="left:1.9px;width:66.2px"><svg style="left:5.9px;top:4px" width="10" height="10" viewBox="0 0 24 24" fill="none" stroke="#34373f" stroke-width="1.7280000000000002" stroke-linecap="round" stroke-linejoin="round" style="display:block"><circle cx="12" cy="12" r="10"/><path d="m16.2 7.8-2 6.3-6.4 2.1 2-6.3Z"/></svg><span style="left:20.4px;top:4.5px">Elevations</span></div><div class="tab" style="left:70.0px;width:52.0px"><svg style="left:3.8px;top:4px" width="10" height="10" viewBox="0 0 24 24" fill="none" stroke="#34373f" stroke-width="1.7280000000000002" stroke-linecap="round" stroke-linejoin="round" style="display:block"><path d="m12 2 10 5-10 5L2 7Z"/><path d="m2 12 10 5 10-5"/><path d="m2 17 10 5 10-5"/></svg><span style="left:18.3px;top:4.5px">Levels</span></div><div class="tab" style="left:122.0px;width:47.0px"><svg style="left:3.8px;top:4px" width="10" height="10" viewBox="0 0 24 24" fill="none" stroke="#34373f" stroke-width="1.7280000000000002" stroke-linecap="round" stroke-linejoin="round" style="display:block"><rect x="3" y="3" width="18" height="18" rx="2"/><path d="M3 9h18M3 15h18M9 3v18M15 3v18" stroke-linecap="butt"/></svg><span style="left:17.6px;top:4.5px">Grids</span></div><div class="tab" style="left:169.0px;width:55.0px"><svg style="left:4.2px;top:4px" width="10" height="10" viewBox="0 0 24 24" fill="none" stroke="#34373f" stroke-width="1.7280000000000002" stroke-linecap="round" stroke-linejoin="round" style="display:block"><path d="M20 10c0 5-5.5 10.2-7.4 11.8a1 1 0 0 1-1.2 0C9.5 20.2 4 15 4 10a8 8 0 0 1 16 0"/><circle cx="12" cy="10" r="3"/></svg><span style="left:18.2px;top:4.5px">Sectors</span></div></div>
  <div class="tab2" style="left:51.5px;width:60px;height:12px"><svg style="left:-1px;top:0px" width="10" height="10" viewBox="0 0 24 24" fill="none" stroke="#34373f" stroke-width="1.7280000000000002" stroke-linecap="round" stroke-linejoin="round" style="display:block"><circle cx="13.5" cy="6.5" r="1"/><circle cx="17.5" cy="10.5" r="1"/><circle cx="8.5" cy="7.5" r="1"/><circle cx="6.5" cy="12.5" r="1"/><path d="M12 2C6.5 2 2 6.5 2 12s4.5 10 10 10c.9 0 1.7-.8 1.7-1.7 0-.4-.2-.8-.4-1.1-.3-.3-.4-.7-.4-1.1a1.6 1.6 0 0 1 1.6-1.6h2c3 0 5.5-2.5 5.5-5.6C22 6 17.5 2 12 2Z"/></svg><span style="left:13.3px;top:0px">Classifiers</span></div><div class="tab2" style="left:118.9px;width:60px;height:12px"><svg style="left:-1px;top:0px" width="10" height="10" viewBox="0 0 24 24" fill="none" stroke="#34373f" stroke-width="1.7280000000000002" stroke-linecap="round" stroke-linejoin="round" style="display:block"><path d="M21 12a9 9 0 1 1-9-9c2.5 0 4.9 1 6.7 2.7L21 8"/><path d="M21 3v5h-5"/></svg><span style="left:12.8px;top:0px">Orientation</span></div>
  <div class="empty">Select a building to manage elevations</div>
 </div>
</div>
</div></div>
</body></html>
